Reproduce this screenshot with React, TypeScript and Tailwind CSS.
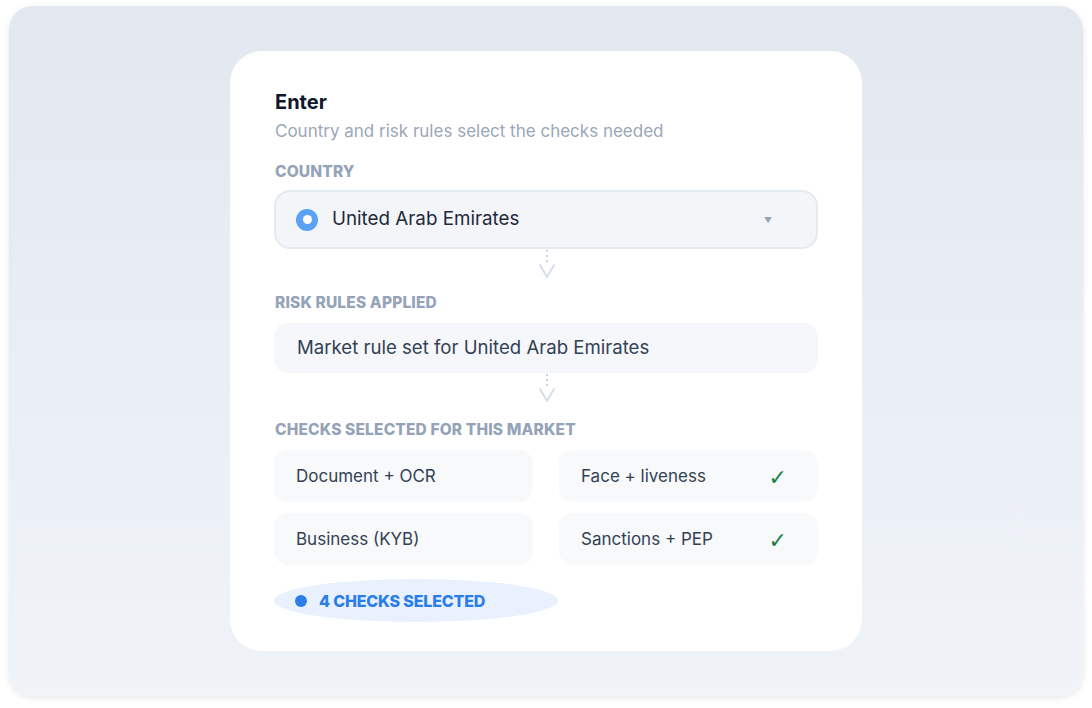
import React from "react";

const font = { fontFamily: "Inter, 'Noto Sans', sans-serif" };

function Connector({ h }: { h: string }) {
  return (
    <div className={`flex justify-center ${h}`}>
      <svg width="24" height="32" viewBox="0 0 24 32" className="mt-[1px]">
        <line x1="12" y1="0" x2="12" y2="13" stroke="#cbd5e1" strokeWidth="2" strokeDasharray="2 3" />
        <polyline points="5,15 12,27 19,15" fill="none" stroke="#d6dee9" strokeWidth="2" strokeLinejoin="round" strokeLinecap="round" />
      </svg>
    </div>
  );
}

function Label({ children, className = "" }: { children: React.ReactNode; className?: string }) {
  return (
    <div className={`text-[15.5px] leading-[20px] font-extrabold tracking-[0.01em] text-[#94a3b8] uppercase ${className}`}>
      {children}
    </div>
  );
}

function CheckCell({ label, checked }: { label: string; checked?: boolean }) {
  return (
    <div className="h-[52px] rounded-[14px] bg-[#f7f9fb] flex items-center justify-between pl-[22px] pr-[31px]">
      <span className="text-[17px] text-[#334155] mt-[2px]">{label}</span>
      {checked && <span className="text-[22px] text-[#15803d] font-bold mt-[2px]" style={{ fontFamily: "'DejaVu Sans', sans-serif" }}>✓</span>}
    </div>
  );
}

export default function App() {
  return (
    <div className="w-full h-[708px] bg-white pt-[6px] pb-[12px] px-[9px]" style={font}>
      <div className="h-full rounded-[24px] bg-gradient-to-b from-[#e3e8f0] to-[#f0f4f9] shadow-[0_2px_6px_rgba(15,23,42,0.10)] flex items-center justify-center">
        <div className="w-[632px] h-[600px] rounded-[32px] bg-white pl-[45px] pr-[44px] pt-[37px] flex flex-col">
          <div className="text-[20px] leading-[28px] font-bold text-[#0f172a]">Enter</div>
          <div className="mt-[3px] text-[17px] leading-[24px] text-[#9aa7b8]">Country and risk rules select the checks needed</div>

          <Label className="mt-[19px]">Country</Label>
          <div className="mt-[8px] -ml-[1px] h-[59px] rounded-[16px] bg-[#f3f5f9] border-2 border-[#e5eaf1] flex items-center pl-[20px] pr-[44px]">
            <span className="w-[22px] h-[22px] rounded-full bg-[#5aa2f8] flex items-center justify-center">
              <span className="w-[9px] h-[9px] rounded-full bg-white" />
            </span>
            <span className="ml-[14px] text-[18.8px] text-[#1e293b] flex-1">United Arab Emirates</span>
            <span className="text-[8px] text-[#94a3b8]">▼</span>
          </div>

          <Connector h="h-[44px]" />

          <Label>Risk rules applied</Label>
          <div className="mt-[10px] -ml-[1px] h-[50px] rounded-[14px] bg-[#f5f7fa] flex items-center pl-[23px]">
            <span className="text-[18.6px] text-[#334155]">Market rule set for United Arab Emirates</span>
          </div>

          <Connector h="h-[47px]" />

          <Label>Checks selected for this market</Label>
          <div className="mt-[10px] -ml-[1px] grid grid-cols-2 gap-x-[26px] gap-y-[11px]">
            <CheckCell label="Document + OCR" />
            <CheckCell label="Face + liveness" checked />
            <CheckCell label="Business (KYB)" />
            <CheckCell label="Sanctions + PEP" checked />
          </div>

          <div className="mt-[14px] -ml-[1px] w-[284px] h-[43px] rounded-[50%] bg-[#e8f1fd] flex items-center pl-[21px]">
            <span className="w-[12px] h-[12px] rounded-full bg-[#2b7de9]" />
            <span className="ml-[12px] text-[16px] font-extrabold text-[#2b7de9] tracking-[-0.01em]">4 CHECKS SELECTED</span>
          </div>
        </div>
      </div>
    </div>
  );
}
